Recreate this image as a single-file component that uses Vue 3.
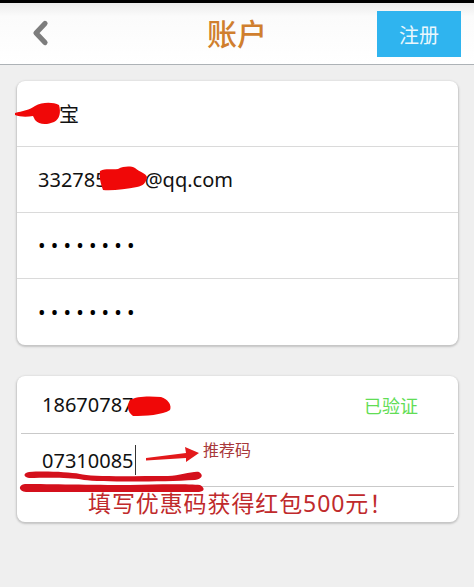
<script setup>
const dots = '••••••••'
</script>

<template>
  <div class="page">
    <div class="status"></div>
    <header class="bar">
      <button class="back" aria-label="back">
        <svg width="20" height="28" viewBox="0 0 20 28">
          <path d="M15 4.5 L6 14 L15 23.5" fill="none" stroke="#7d7d7d" stroke-width="5.2" stroke-linecap="round" stroke-linejoin="round" />
        </svg>
      </button>
      <h1 class="title">账户</h1>
      <button class="register">注册</button>
    </header>

    <main class="content">
      <section class="card account">
        <div class="row name"><span class="text">宝</span></div>
        <div class="row email"><span class="text">332785</span><span class="text gap">@qq.com</span></div>
        <div class="row pw"><span class="dots">{{ dots }}</span></div>
        <div class="row pw"><span class="dots">{{ dots }}</span></div>
      </section>

      <section class="card phone">
        <div class="row mobile">
          <span class="text">18670787</span>
          <span class="verified">已验证</span>
        </div>
        <div class="row code">
          <span class="text">07310085</span><span class="caret"></span>
          <span class="hint">推荐码</span>
        </div>
        <div class="promo">填写优惠码获得红包500元！</div>
      </section>
    </main>

    <svg class="marks" width="474" height="587" viewBox="0 0 474 587">
      <path d="M15 113 C22 111 30 110 35 106 C42 102 53 102 59 105 C61 112 60 119 54 122 C47 125 39 125 35 120 L33 116 C27 117 20 117 15 115 Z" fill="#f00808" />
      <path d="M100 171 C106 168 112 170 118 169 C124 166 131 166 135 168 C139 172 146 173 147 177 C146 183 143 186 137 187 C126 189 112 191 103 190 C101 184 99 178 100 171 Z" fill="#f00808" />
      <path d="M130 400 C136 396 150 396 161 397 C168 399 172 405 170 410 C163 415 145 416 133 416 C127 412 127 405 130 400 Z" fill="#f00808" />
      <path d="M146 458 L186 453 L185 447 L199 453 L186 462 L186 458 L146 460.5 Z" fill="#e3191b" />
      <path d="M29 472 C45 471 68 472 80 474 C90 477 130 476 168 476 C180 476 192 471 199 472 C204 475 202 479 195 480 C160 482 100 482 84 480 C68 477 45 478 29 478 C23 477 23 473 29 472 Z" fill="#d4101c" />
      <path d="M25 484 C50 484 90 485 130 485 C160 484 190 484 200 485 C205 488 205 491 199 492 C160 492 70 492 26 492 C18 491 18 485 25 484 Z" fill="#d4101c" />
    </svg>
  </div>
</template>

<style scoped>
.page {
  position: relative;
  width: 474px;
  height: 587px;
  overflow: hidden;
  background: #efefef;
  font-family: "Noto Sans", "Noto Sans CJK SC", sans-serif;
}
.status {
  height: 3px;
  background: #000;
}
.bar {
  height: 62px;
  box-sizing: border-box;
  padding: 8px 13px 0 30px;
  display: flex;
  align-items: flex-start;
  justify-content: space-between;
  background: linear-gradient(#ececec, #fbfbfb 22%, #fff);
  border-bottom: 1px solid #adb2b6;
  position: relative;
}
.back {
  width: 22px;
  height: 30px;
  margin-top: 8px;
  padding: 0;
  border: 0;
  background: none;
  display: flex;
}
.title {
  position: absolute;
  left: 0;
  right: 0;
  top: 12px;
  margin: 0;
  text-align: center;
  font-size: 30px;
  line-height: 38px;
  font-weight: 500;
  color: #d07f2e;
  pointer-events: none;
}
.register {
  width: 84px;
  height: 46px;
  padding: 0;
  border: 0;
  background: #2fb4ef;
  color: #e9f7fd;
  font-family: inherit;
  font-size: 20px;
}
.content {
  padding: 16px 16px 0 17px;
  display: flex;
  flex-direction: column;
  gap: 31px;
}
.card {
  background: #fff;
  border-radius: 8px;
  box-shadow: 0 1px 2px 1px #c4c4c4;
}
.row {
  box-sizing: border-box;
  display: flex;
  align-items: center;
  font-size: 20px;
  color: #111;
}
.account .row {
  height: 66px;
  padding-left: 21px;
  border-bottom: 1px solid #dadada;
}
.account .row:last-child {
  border-bottom: 0;
}
.name .text {
  margin-left: 21px;
}
.gap {
  margin-left: 38px;
}
.dots {
  font-size: 20px;
  letter-spacing: 5.2px;
  color: #000;
}
.phone .row {
  margin: 0 4px;
  padding-left: 21px;
  border-bottom: 1px solid #c9c9c9;
}
.mobile {
  height: 58px;
  justify-content: space-between;
  padding-right: 36px;
}
.verified {
  font-size: 18px;
  color: #62dd55;
}
.code {
  height: 53px;
  position: relative;
}
.caret {
  width: 1px;
  height: 30px;
  margin-left: 1px;
  background: #333;
}
.hint {
  position: absolute;
  left: 182px;
  top: 3px;
  font-size: 16px;
  color: #a8383a;
}
.promo {
  height: 35px;
  padding-left: 71px;
  font-size: 23px;
  line-height: 33px;
  letter-spacing: 0.9px;
  color: #c02a2c;
  white-space: nowrap;
}
.marks {
  position: absolute;
  left: 0;
  top: 0;
  pointer-events: none;
}
</style>
